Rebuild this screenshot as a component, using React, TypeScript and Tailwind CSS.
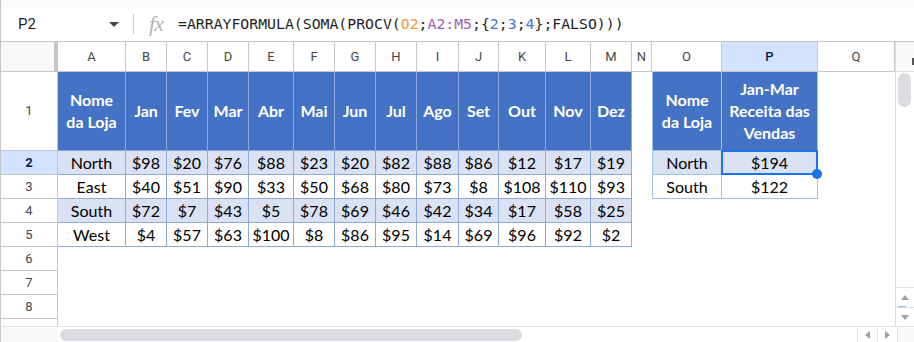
import React from "react";

const letters = ["A","B","C","D","E","F","G","H","I","J","K","L","M","N","O","P","Q"];
const months = ["Jan","Fev","Mar","Abr","Mai","Jun","Jul","Ago","Set","Out","Nov","Dez"];
const data: [string, number[]][] = [
  ["North", [98,20,76,88,23,20,82,88,86,12,17,19]],
  ["East", [40,51,90,33,50,68,80,73,8,108,110,93]],
  ["South", [72,7,43,5,78,69,46,42,34,17,58,25]],
  ["West", [4,57,63,100,8,86,95,14,69,96,92,2]],
];
const second: [string, string][] = [["North", "$194"], ["South", "$122"]];

const cellFont = { fontFamily: "Lato, 'Open Sans', sans-serif" };

function renderCell(r: number, c: number) {
  const key = `${r}-${c}`;
  if (r === 0) {
    if (c === 0) {
      return <div key={key} className="bg-[#f8f9fa] border-b border-[#c7c7c7] border-r-[4px] border-r-[#c4c7c5] border-l border-l-[#c7c7c7]" />;
    }
    const isP = c === 16;
    return (
      <div
        key={key}
        className={`flex items-center justify-center border-r border-b border-[#c7c7c7] text-[13px] ${isP ? "bg-[#d3e3fd] text-[#041e49] font-medium" : "bg-white text-[#444746]"}`}
        style={{ fontFamily: "Roboto, Arial, sans-serif" }}
      >
        {letters[c - 1]}
      </div>
    );
  }
  if (c === 0) {
    if (r === 9) return <div key={key} className="border-r border-[#c7c7c7] border-l border-l-[#c7c7c7] bg-white" />;
    const sel = r === 2;
    return (
      <div
        key={key}
        className={`flex items-center justify-center border-r border-b border-[#c7c7c7] border-l border-l-[#c7c7c7] text-[13px] ${sel ? "bg-[#d3e3fd] text-[#041e49] font-bold" : "bg-white text-[#444746]"}`}
        style={{ fontFamily: "Roboto, Arial, sans-serif" }}
      >
        {r}
      </div>
    );
  }
  if (r >= 1 && r <= 5 && c >= 1 && c <= 13) {
    if (r === 1) {
      return (
        <div key={key} className="flex items-center justify-center bg-[#4472c4] border-r border-b border-[#8eaadb] text-white font-bold text-[16px] leading-[22px] text-center" style={cellFont}>
          {c === 1 ? (<span>Nome<br />da Loja</span>) : months[c - 2]}
        </div>
      );
    }
    const row = data[r - 2];
    const txt = c === 1 ? row[0] : `$${row[1][c - 2]}`;
    return (
      <div key={key} className={`flex items-center justify-center border-r border-b border-[#8eaadb] text-[16px] text-black whitespace-nowrap ${r % 2 === 0 ? "bg-[#d9e1f2]" : "bg-white"}`} style={cellFont}>
        {txt}
      </div>
    );
  }
  if (r >= 1 && r <= 3 && (c === 15 || c === 16)) {
    const left = c === 15 ? "border-l" : "";
    if (r === 1) {
      return (
        <div key={key} className={`flex items-center justify-center bg-[#4472c4] border-r border-b ${left} border-[#9dc3e6] text-white font-bold text-[16px] leading-[22px] text-center whitespace-nowrap`} style={cellFont}>
          {c === 15 ? (<span>Nome<br />da Loja</span>) : (<span>Jan-Mar<br />Receita das<br />Vendas</span>)}
        </div>
      );
    }
    const row = second[r - 2];
    return (
      <div key={key} className={`flex items-center justify-center border-r border-b ${left} border-[#9dc3e6] text-[16px] text-black ${r === 2 ? "bg-[#d9e1f2]" : "bg-white"}`} style={cellFont}>
        {c === 15 ? row[0] : row[1]}
      </div>
    );
  }
  return <div key={key} className="bg-white" />;
}

function Formula() {
  return (
    <span className="text-[14.8px] text-[#1f1f1f] whitespace-pre" style={{ fontFamily: "'DejaVu Sans Mono', 'Liberation Mono', monospace" }}>
      =ARRAYFORMULA(SOMA(PROCV(<span className="text-[#f09c2a]">O2</span>;<span className="text-[#a35cb4]">A2:M5</span>;{"{"}<span className="text-[#3c78d8]">2</span>;<span className="text-[#3c78d8]">3</span>;<span className="text-[#3c78d8]">4</span>{"}"};FALSO)))
    </span>
  );
}

export default function App() {
  const rows = Array.from({ length: 10 }, (_, i) => i);
  const cols = Array.from({ length: 18 }, (_, i) => i);
  return (
    <div className="w-[914px] h-[342px] overflow-hidden bg-white flex flex-col select-none">
      <div className="h-[7px] bg-[#f9fbfd] border-l border-[#c7c7c7]" />
      <div className="h-[35px] flex items-center bg-white border-b border-[#c7c7c7] border-l border-l-[#c7c7c7]">
        <div className="w-[132px] flex items-center pl-[17px] pr-[14px] justify-between">
          <span className="text-[15px] text-[#1f1f1f]" style={{ fontFamily: "Roboto, Arial, sans-serif" }}>P2</span>
          <svg width="10" height="5" viewBox="0 0 10 5"><path d="M0 0 L10 0 L5 5 Z" fill="#444746" /></svg>
        </div>
        <div className="w-px h-[20px] bg-[#c7c7c7]" />
        <div className="w-[44px] flex items-center justify-center">
          <span className="italic text-[22px] text-[#b4b4b4] tracking-[-1px] leading-none" style={{ fontFamily: "'Liberation Serif', serif" }}>fx</span>
        </div>
        <Formula />
      </div>
      <div className="flex h-[284px]">
        <div className="relative w-[895px]">
          <div className="grid grid-cols-[58px_68px_41px_41px_41px_45px_41px_41px_41px_42px_40px_47px_45px_41px_20px_70px_96px_77px] grid-rows-[30px_79px_24px_24px_24px_24px_24px_24px_24px_7px]">
            {rows.map((r) => cols.map((c) => renderCell(r, c)))}
          </div>
          <div className="absolute left-[721px] top-[108px] w-[97px] h-[25px] border-2 border-[#1a73e8] pointer-events-none" />
          <div className="absolute left-[812px] top-[127px] w-[10px] h-[10px] rounded-full bg-[#1a73e8]" />
        </div>
        <div className="w-[19px] flex flex-col border-l border-[#dadce0] bg-[#f8f9fa]">
          <div className="h-[30px] border-b border-[#e0e0e0] relative">
            <div className="absolute right-0 top-[16px] w-[2px] h-[7px] bg-[#555]" />
          </div>
          <div className="flex-1 bg-white px-[2px] pt-px">
            <div className="h-[34px] w-[13px] rounded-full bg-[#dadce0]" />
          </div>
          <div className="h-[20px] border-t border-[#e0e0e0] bg-white flex items-center justify-center relative">
            <svg width="8" height="5" viewBox="0 0 8 5"><path d="M0 5 L8 5 L4 0 Z" fill="#9aa0a6" /></svg>
            <div className="absolute left-[2px] bottom-0 w-[8px] h-px bg-[#8ab4f8]" />
          </div>
          <div className="h-[19px] border-t border-[#e0e0e0] bg-white flex items-center justify-center">
            <svg width="8" height="5" viewBox="0 0 8 5"><path d="M0 0 L8 0 L4 5 Z" fill="#9aa0a6" /></svg>
          </div>
        </div>
      </div>
      <div className="h-[16px] flex border-t border-[#e0e0e0] bg-white">
        <div className="w-[58px] bg-[#f8f9fa] border-l border-[#c7c7c7]" />
        <div className="flex-1 flex items-center pl-[2px]">
          <div className="h-[12px] w-[462px] rounded-full bg-[#dadce0]" />
        </div>
        <div className="w-[20px] border-l border-[#e0e0e0] flex items-center justify-center">
          <svg width="5" height="8" viewBox="0 0 5 8"><path d="M5 0 L5 8 L0 4 Z" fill="#9aa0a6" /></svg>
        </div>
        <div className="w-[20px] border-l border-[#e0e0e0] flex items-center justify-center">
          <svg width="5" height="8" viewBox="0 0 5 8"><path d="M0 0 L0 8 L5 4 Z" fill="#9aa0a6" /></svg>
        </div>
        <div className="w-[17px] border-l border-[#e0e0e0] bg-[#f8f9fa]" />
      </div>
    </div>
  );
}
